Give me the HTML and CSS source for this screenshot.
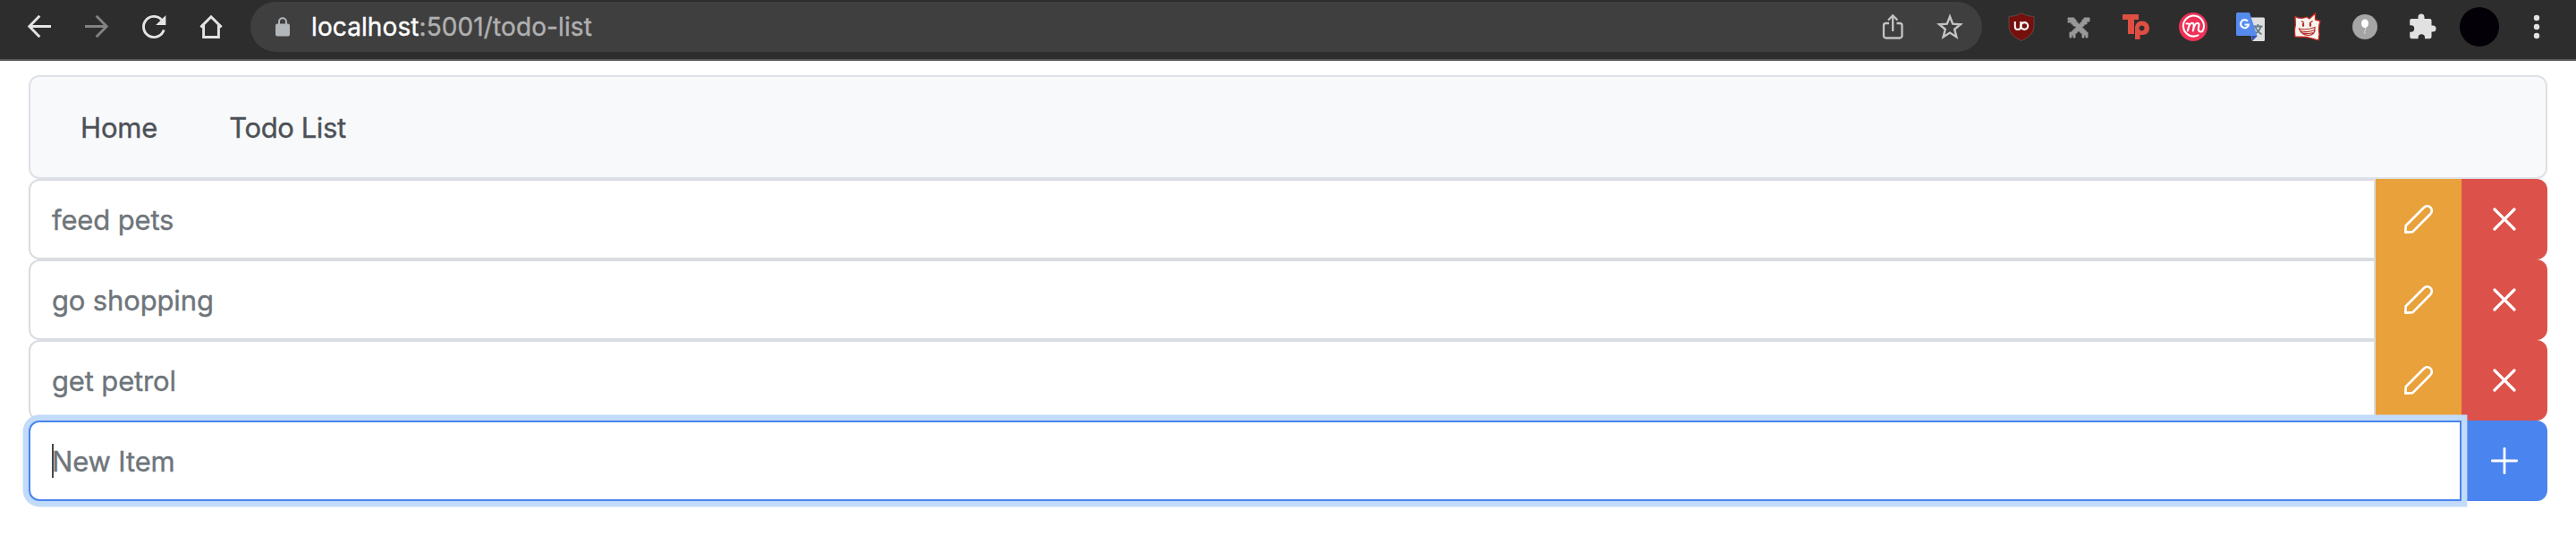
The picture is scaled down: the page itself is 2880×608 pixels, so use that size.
FILE: index.html
```html
<!DOCTYPE html>
<html lang="en">
<head>
<meta charset="utf-8">
<title>Todo List</title>
<link rel="stylesheet" href="styles.css">
</head>
<body>
<svg class="defs" aria-hidden="true">
  <symbol id="pencil" viewBox="0 0 32 32">
    <path d="M1.300 30.700 1.700 23.200 21.900 3C24 .9 27.300.9 29.300 2.900S31.200 8.200 29.100 10.300L9.400 30.100Z" fill="none" stroke="#fff" stroke-width="2.700" stroke-linejoin="round"/>
  </symbol>
  <symbol id="cross" viewBox="0 0 32 32">
    <path d="M5 5 27 27M27 5 5 27" fill="none" stroke="#fff" stroke-width="3.200" stroke-linecap="round"/>
  </symbol>
  <symbol id="plus" viewBox="0 0 32 32">
    <path d="M16 2.300V29.700M2.300 16H29.700" fill="none" stroke="#fff" stroke-width="2.800" stroke-linecap="round"/>
  </symbol>
</svg>

<header class="toolbar">
  <div class="nav-icons">
    <svg class="icon" viewBox="0 0 32 32"><path d="M29 15.500H5M16.300 3.800 4.800 15.500 16.300 27.200" fill="none" stroke="#e4e4e4" stroke-width="2.900"/></svg>
    <svg class="icon" viewBox="0 0 32 32"><path d="M3 15.500H27M15.700 3.800 27.200 15.500 15.700 27.200" fill="none" stroke="#828282" stroke-width="2.900"/></svg>
    <svg class="icon" viewBox="0 0 32 32"><path d="M27.200 19.300A11.600 11.600 0 1 1 24.500 8" fill="none" stroke="#e4e4e4" stroke-width="2.900"/><path d="M29.400 3V14H18.200Z" fill="#e4e4e4"/></svg>
    <svg class="icon" viewBox="0 0 32 32"><path d="M4.400 16.400 16 4.800 27.600 16.400M7.600 14V27.500H24.400V14" fill="none" stroke="#e4e4e4" stroke-width="2.900"/></svg>
  </div>
  <div class="address">
    <svg class="lock" viewBox="0 0 16 22"><path d="M4 8V5.300a4 4 0 0 1 8 0V8" fill="none" stroke="#b2b6bb" stroke-width="2"/><rect y="7.500" width="16" height="14" rx="2" fill="#b2b6bb"/></svg>
    <span class="url"><span class="host">localhost</span>:5001/todo-list</span>
    <svg class="icon share" viewBox="0 0 32 32"><path d="M12 12H8.500A2.500 2.500 0 0 0 6 14.500V26A2.500 2.500 0 0 0 8.500 28.500H24A2.500 2.500 0 0 0 26.500 26V14.500A2.500 2.500 0 0 0 24 12H20.500M16.200 21V3.500M11 8.500 16.200 3.300 21.400 8.500" fill="none" stroke="#c4c4c4" stroke-width="2.300"/></svg>
    <svg class="icon" viewBox="0 0 32 32"><path d="M16 4.500 19.200 12.600 27.900 13.200 21.200 18.800 23.400 27.300 16 22.600 8.600 27.300 10.800 18.800 4.100 13.200 12.800 12.600Z" fill="none" stroke="#c4c4c4" stroke-width="2.400"/></svg>
  </div>
  <div class="extensions">
    <svg class="icon" viewBox="0 0 32 32"><path d="M16 .5C20.500 3.500 25 4.300 30 4.300V15C30 23.500 23.500 28 16 31.500 8.500 28 2 23.500 2 15V4.300C7 4.300 11.500 3.500 16 .5Z" fill="#75100c" stroke="#675250" stroke-width=".8"/><path d="M8.800 10V16Q8.800 19 12 19T15.300 16V10" fill="none" stroke="#fff" stroke-width="2"/><circle cx="19.300" cy="15" r="3.900" fill="none" stroke="#fff" stroke-width="2.200"/></svg>
    <svg class="icon" viewBox="0 0 32 32"><path d="M4 6H11V8H13V11H15V13H18V11H20V8H22V6H28V10H25V13H22V15H20V18H22V20H24V22H26V28H24V25H22V28H20V23H18V21H14V23H12V28H10V25H8V28H6V22H9V20H11V18H13V15H10V13H8V11H4V9H7V8H4Z" fill="#989898" stroke="#989898"/></svg>
    <svg class="icon" viewBox="0 0 32 32"><path d="M1 2H19V8H14V24H7V8H1Z" fill="#df4e43"/><path fill-rule="evenodd" d="M15 30V18C15 12.500 18 9.500 22.500 9.500S31 12.700 31 17.500 27.800 25 23.500 25H20.500V30ZM22.500 14.500A3 3 0 1 0 22.600 14.500Z" fill="#df4e43"/></svg>
    <svg class="icon" viewBox="0 0 32 32"><circle cx="16" cy="16" r="16" fill="#ee3157"/><path d="M21.500 25.400A11.500 11.500 0 1 1 26.600 20.500Q25.300 22.200 23 21 21.200 19.800 22.100 16.500C23 13.500 22.500 11.500 20.500 11.800 18.200 12 16.800 16 15.800 20.500 17 15.500 17.200 11.800 14.800 11.800 12.200 11.800 10.800 16 9.800 20.500L11.500 14.500Q12 11.500 8.500 12.500" fill="none" stroke="#fff" stroke-width="2.100" stroke-linecap="round" stroke-linejoin="round"/></svg>
    <svg class="icon" viewBox="0 0 32 32"><path d="M12 5.500H30.500A1.500 1.500 0 0 1 32 7V30.500A1.500 1.500 0 0 1 30.500 32H18Z" fill="#dfdfdf"/><path d="M17 26H24L18 32Z" fill="#354fb4"/><path d="M19 15.500H29.500M24.500 13V16M27.500 16C26.500 20 23.500 22.500 20.500 24.500M21.500 16C23 20 25.500 22.500 28.500 24.500" fill="none" stroke="#607d87" stroke-width="1.800"/><path d="M1.500 0H15L23.500 26H1.500A1.500 1.500 0 0 1 0 24.500V1.500A1.500 1.500 0 0 1 1.500 0Z" fill="#568bee"/><path d="M13 9.800A4.500 4.500 0 1 0 14 13.500H9.500" fill="none" stroke="#f5f7ff" stroke-width="2.200"/></svg>
    <svg class="icon" viewBox="0 0 32 32"><path d="M2 4.500Q8 8 15 5L18 7 24.500.8V8L30 9.500Q27.500 17 29 24L28 31Q21 29 15 27.500L2 27Q.8 20 2.300 14Z" fill="#f7f3f1" stroke="#c62b20" stroke-width="1.300" stroke-linejoin="round"/><path d="M6.500 18Q15 20 24 16.500 25 25.500 16.500 25.500 9 25 6.500 18ZM8 20.500Q16 23 23.500 19.500M10.500 22.800Q16.500 24.500 22 22.500" fill="none" stroke="#b93026" stroke-width="1.200"/><path d="M9 9.500 12 11.500M18 12 21.500 9.500" stroke="#b93026" stroke-width="1.500"/><ellipse cx="11" cy="13.800" rx="1.200" ry="2.200" fill="#b93026"/><ellipse cx="19" cy="13.800" rx="1.200" ry="2.200" fill="#b93026"/></svg>
    <svg class="icon" viewBox="0 0 32 32"><circle cx="16" cy="16" r="14" fill="#a5a5a5"/><ellipse cx="16" cy="12.300" rx="4" ry="4.900" fill="#fff"/><path d="M16 17 17 19Q14.500 21 16 23.800" fill="none" stroke="#ddd" stroke-width="1"/></svg>
    <svg class="icon" viewBox="0 0 32 32"><path d="M4.500 7H11.500V5A3.500 3.500 0 0 1 18.500 5V7H24.500A2 2 0 0 1 26.500 9V14.500H28A3.500 3.500 0 0 1 28 21.500H26.500V27A2.300 2.300 0 0 1 24.200 29.300H19V28A3.700 3.700 0 0 0 11.600 28V29.300H4.500A2.300 2.300 0 0 1 2.200 27V21.700H3.500A3.700 3.700 0 0 0 3.500 14.300H2.200V9A2 2 0 0 1 4.500 7Z" fill="#e1e1e1"/></svg>
  </div>
  <span class="avatar"></span>
  <svg class="icon menu" viewBox="0 0 32 32"><g fill="#e2e2e2"><circle cx="16" cy="6" r="3.200"/><circle cx="16" cy="16" r="3.200"/><circle cx="16" cy="26" r="3.200"/></g></svg>
</header>

<main class="page">
  <nav class="navbar"><a class="link home">Home</a><a class="link list">Todo List</a></nav>
  <div class="row">
    <div class="field"><span>feed pets</span></div>
    <button class="btn edit"><svg class="glyph"><use href="#pencil"/></svg></button>
    <button class="btn remove"><svg class="glyph"><use href="#cross"/></svg></button>
  </div>
  <div class="row">
    <div class="field"><span>go shopping</span></div>
    <button class="btn edit"><svg class="glyph"><use href="#pencil"/></svg></button>
    <button class="btn remove"><svg class="glyph"><use href="#cross"/></svg></button>
  </div>
  <div class="row">
    <div class="field"><span>get petrol</span></div>
    <button class="btn edit"><svg class="glyph"><use href="#pencil"/></svg></button>
    <button class="btn remove"><svg class="glyph"><use href="#cross"/></svg></button>
  </div>
  <div class="row">
    <div class="field focused"><span class="caret"></span><span>New Item</span></div>
    <button class="btn add"><svg class="glyph"><use href="#plus"/></svg></button>
  </div>
</main>
</body>
</html>
```
FILE: styles.css
```css
* { box-sizing: border-box; }
body {
  min-height: 608px;
  margin: 0;
  background: #fff;
  font-family: Inter, "Liberation Sans", sans-serif;
  font-size: 31px;
  letter-spacing: -0.15px;
  -webkit-text-stroke: 0.4px currentColor;
}
.defs { display: none; }
.toolbar {
  display: flex;
  align-items: center;
  height: 68px;
  padding: 2px 28px 8px;
  background: #2d2d2d;
  border-bottom: 2px solid #5a5758;
}
.icon { display: block; flex: none; width: 32px; height: 32px; }
.nav-icons { display: flex; gap: 32px; width: 252px; }
.address {
  display: flex;
  align-items: center;
  width: 1936px;
  height: 56px;
  padding: 0 20px 0 28px;
  border-radius: 28px;
  background: #3f3f3f;
}
.lock { width: 16px; height: 22px; }
.url {
  margin-left: 24px;
  color: #b0b0b0;
  font-size: 28px;
  letter-spacing: 0.1px;
  white-space: nowrap;
}
.host { color: #fff; }
.share { margin-left: auto; margin-right: 32px; }
.extensions { display: flex; gap: 32px; margin-left: 28px; }
.avatar {
  width: 44px;
  height: 44px;
  margin-left: 26px;
  border-radius: 50%;
  background: #030107;
}
.menu { margin-left: 26px; }
.page { padding: 16px 32px 48px; }
.navbar {
  display: flex;
  align-items: center;
  gap: 80px;
  height: 116px;
  padding-left: 56px;
  border: 2px solid #dee1e6;
  border-radius: 12px;
  background: #f8f9fb;
  color: #4c5157;
}
.list { letter-spacing: -0.4px; }
.row { display: flex; height: 90px; }
.field {
  display: flex;
  align-items: center;
  flex: 1;
  padding-left: 24px;
  border: 2px solid #d9dce1;
  border-radius: 12px 0 0 12px;
  background: #fff;
  color: #6e757b;
}
.focused {
  position: relative;
  border-color: #4a84ee;
  box-shadow: 0 0 0 6.4px #c2dbfa;
}
.caret { width: 2px; height: 38px; margin-right: -2px; background: #43484e; }
.btn {
  display: flex;
  align-items: center;
  justify-content: center;
  width: 96px;
  padding: 0;
  border: 0;
}
.glyph { width: 32px; height: 32px; }
.edit { background: #e9a13b; }
.remove { background: #dc524a; border-radius: 0 12px 12px 0; }
.add { background: #4a84ee; border-radius: 0 12px 12px 0; }
```
